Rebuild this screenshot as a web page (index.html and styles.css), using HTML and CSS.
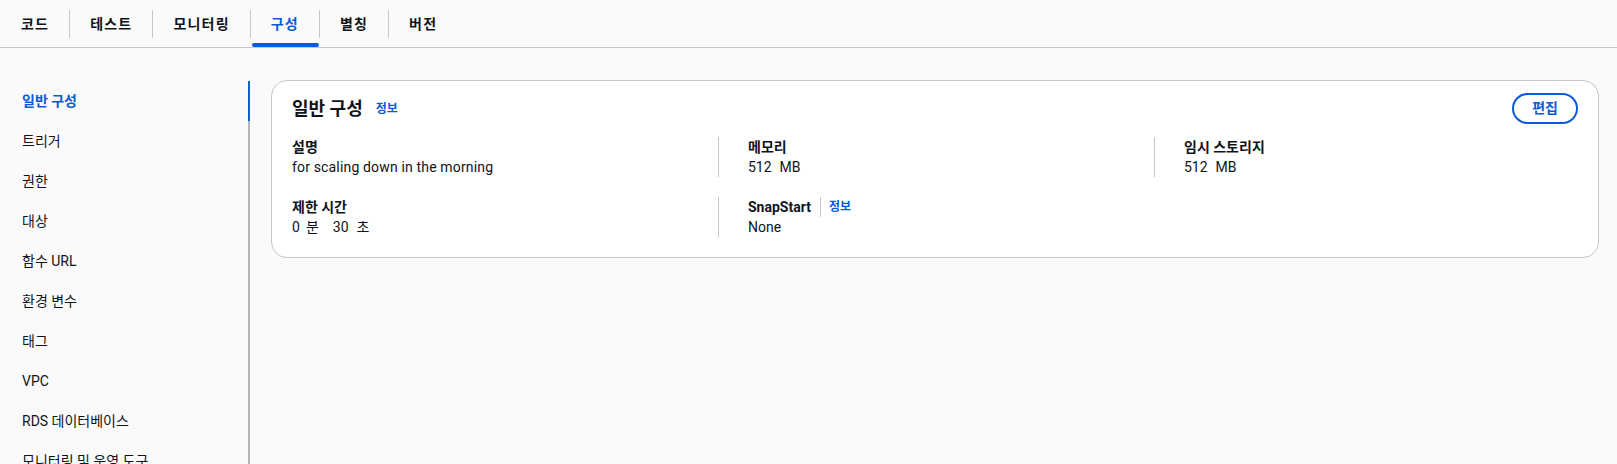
FILE: index.html
```html
<!DOCTYPE html>
<html lang="ko">
<head>
<meta charset="utf-8">
<title>구성</title>
<link rel="stylesheet" href="styles.css">
</head>
<body>
<div class="tabs">
  <div class="tab"><span class="tab-label">코드</span></div>
  <div class="tab"><span class="tab-label">테스트</span></div>
  <div class="tab"><span class="tab-label">모니터링</span></div>
  <div class="tab active"><span class="tab-label">구성</span></div>
  <div class="tab"><span class="tab-label">별칭</span></div>
  <div class="tab"><span class="tab-label">버전</span></div>
</div>
<div class="main">
  <nav class="side">
    <div class="side-item active">일반 구성</div>
    <div class="side-item">트리거</div>
    <div class="side-item">권한</div>
    <div class="side-item">대상</div>
    <div class="side-item">함수 URL</div>
    <div class="side-item">환경 변수</div>
    <div class="side-item">태그</div>
    <div class="side-item">VPC</div>
    <div class="side-item">RDS 데이터베이스</div>
    <div class="side-item">모니터링 및 운영 도구</div>
  </nav>
  <section class="card">
    <div class="card-header">
      <div class="card-title"><h2>일반 구성</h2><a class="info">정보</a></div>
      <button class="btn">편집</button>
    </div>
    <div class="cols">
      <div class="item">
        <div class="label">설명</div>
        <div class="value latin">for scaling down in the morning</div>
      </div>
      <div class="item divided">
        <div class="label">메모리</div>
        <div class="value"><span>512</span><span class="unit">MB</span></div>
      </div>
      <div class="item divided">
        <div class="label">임시 스토리지</div>
        <div class="value"><span>512</span><span class="unit">MB</span></div>
      </div>
      <div class="item">
        <div class="label">제한 시간</div>
        <div class="value"><span>0</span><span class="unit-s">분</span><span class="num-gap">30</span><span class="unit">초</span></div>
      </div>
      <div class="item divided">
        <div class="label"><span>SnapStart</span><span class="sep"></span><a class="info">정보</a></div>
        <div class="value">None</div>
      </div>
    </div>
  </section>
</div>
</body>
</html>
```
FILE: styles.css
```css
* { box-sizing: border-box; }
html, body { margin: 0; padding: 0; }
body {
  background: #fafafa;
  color: #0f141a;
  font-family: Roboto, "Noto Sans CJK KR", sans-serif;
  font-size: 14px;
  line-height: 20px;
  height: 464px;
  overflow: hidden;
}
.tabs {
  display: flex;
  height: 48px;
  border-bottom: 1px solid #c6c6cd;
  padding-left: 1px;
}
.tab {
  position: relative;
  padding-top: 10px;
}
.tab-label {
  display: block;
  height: 28px;
  line-height: 28px;
  padding: 0 20px 0 20px;
  font-weight: 700;
  letter-spacing: 1.2px;
  border-left: 1px solid #c6c6cd;
}
.tab:first-child .tab-label { border-left: none; }
.tab.active .tab-label { color: #0a5bd8; }
.tab.active::after {
  content: "";
  position: absolute;
  left: 2px;
  right: 0;
  bottom: 0;
  height: 4px;
  border-radius: 2px;
  background: #0a5bd8;
}
.main {
  display: flex;
  align-items: flex-start;
  padding-top: 32px;
}
.side {
  width: 250px;
  flex: none;
  margin-top: 1px;
  min-height: 400px;
  border-right: 2px solid #b4b4bb;
}
.side-item {
  position: relative;
  height: 40px;
  line-height: 40px;
  padding-left: 22px;
  white-space: nowrap;
}
.side-item.active { color: #0a5bd8; font-weight: 700; }
.side-item.active::after {
  content: "";
  position: absolute;
  right: -2px;
  top: 0;
  width: 2px;
  height: 40px;
  background: #0a5bd8;
}
.card {
  flex: 1;
  margin: 0 18px 0 21px;
  background: #ffffff;
  border: 1px solid #c6c6cd;
  border-radius: 16px;
  padding: 12px 20px 20px;
}
.card-header {
  display: flex;
  align-items: center;
  justify-content: space-between;
  height: 31px;
  margin-bottom: 13px;
}
.card-title { display: flex; align-items: center; gap: 13px; }
.card-title h2 { margin: 0; font-size: 18px; line-height: 24px; font-weight: 700; }
.info {
  color: #0a5bd8;
  font-size: 12px;
  font-weight: 700;
  line-height: 16px;
  cursor: pointer;
}
.btn {
  height: 31px;
  padding: 0 18px;
  border: 2px solid #0a5bd8;
  border-radius: 20px;
  background: #ffffff;
  color: #0a5bd8;
  font-family: inherit;
  font-size: 14px;
  font-weight: 700;
  line-height: 27px;
}
.cols {
  display: grid;
  grid-template-columns: 426px 436px 1fr;
  row-gap: 20px;
}
.item { min-height: 40px; }
.item.divided { border-left: 1px solid #c6c6cd; padding-left: 29px; }
.label { font-weight: 700; display: flex; align-items: center; }
.value { white-space: nowrap; }
.value.latin { letter-spacing: 0.16px; }
.unit { margin-left: 8px; }
.unit-s { margin-left: 6px; }
.num-gap { margin-left: 14px; }
.sep {
  display: inline-block;
  width: 1px;
  height: 20px;
  background: #c6c6cd;
  margin: 0 8px 0 9px;
}
```
